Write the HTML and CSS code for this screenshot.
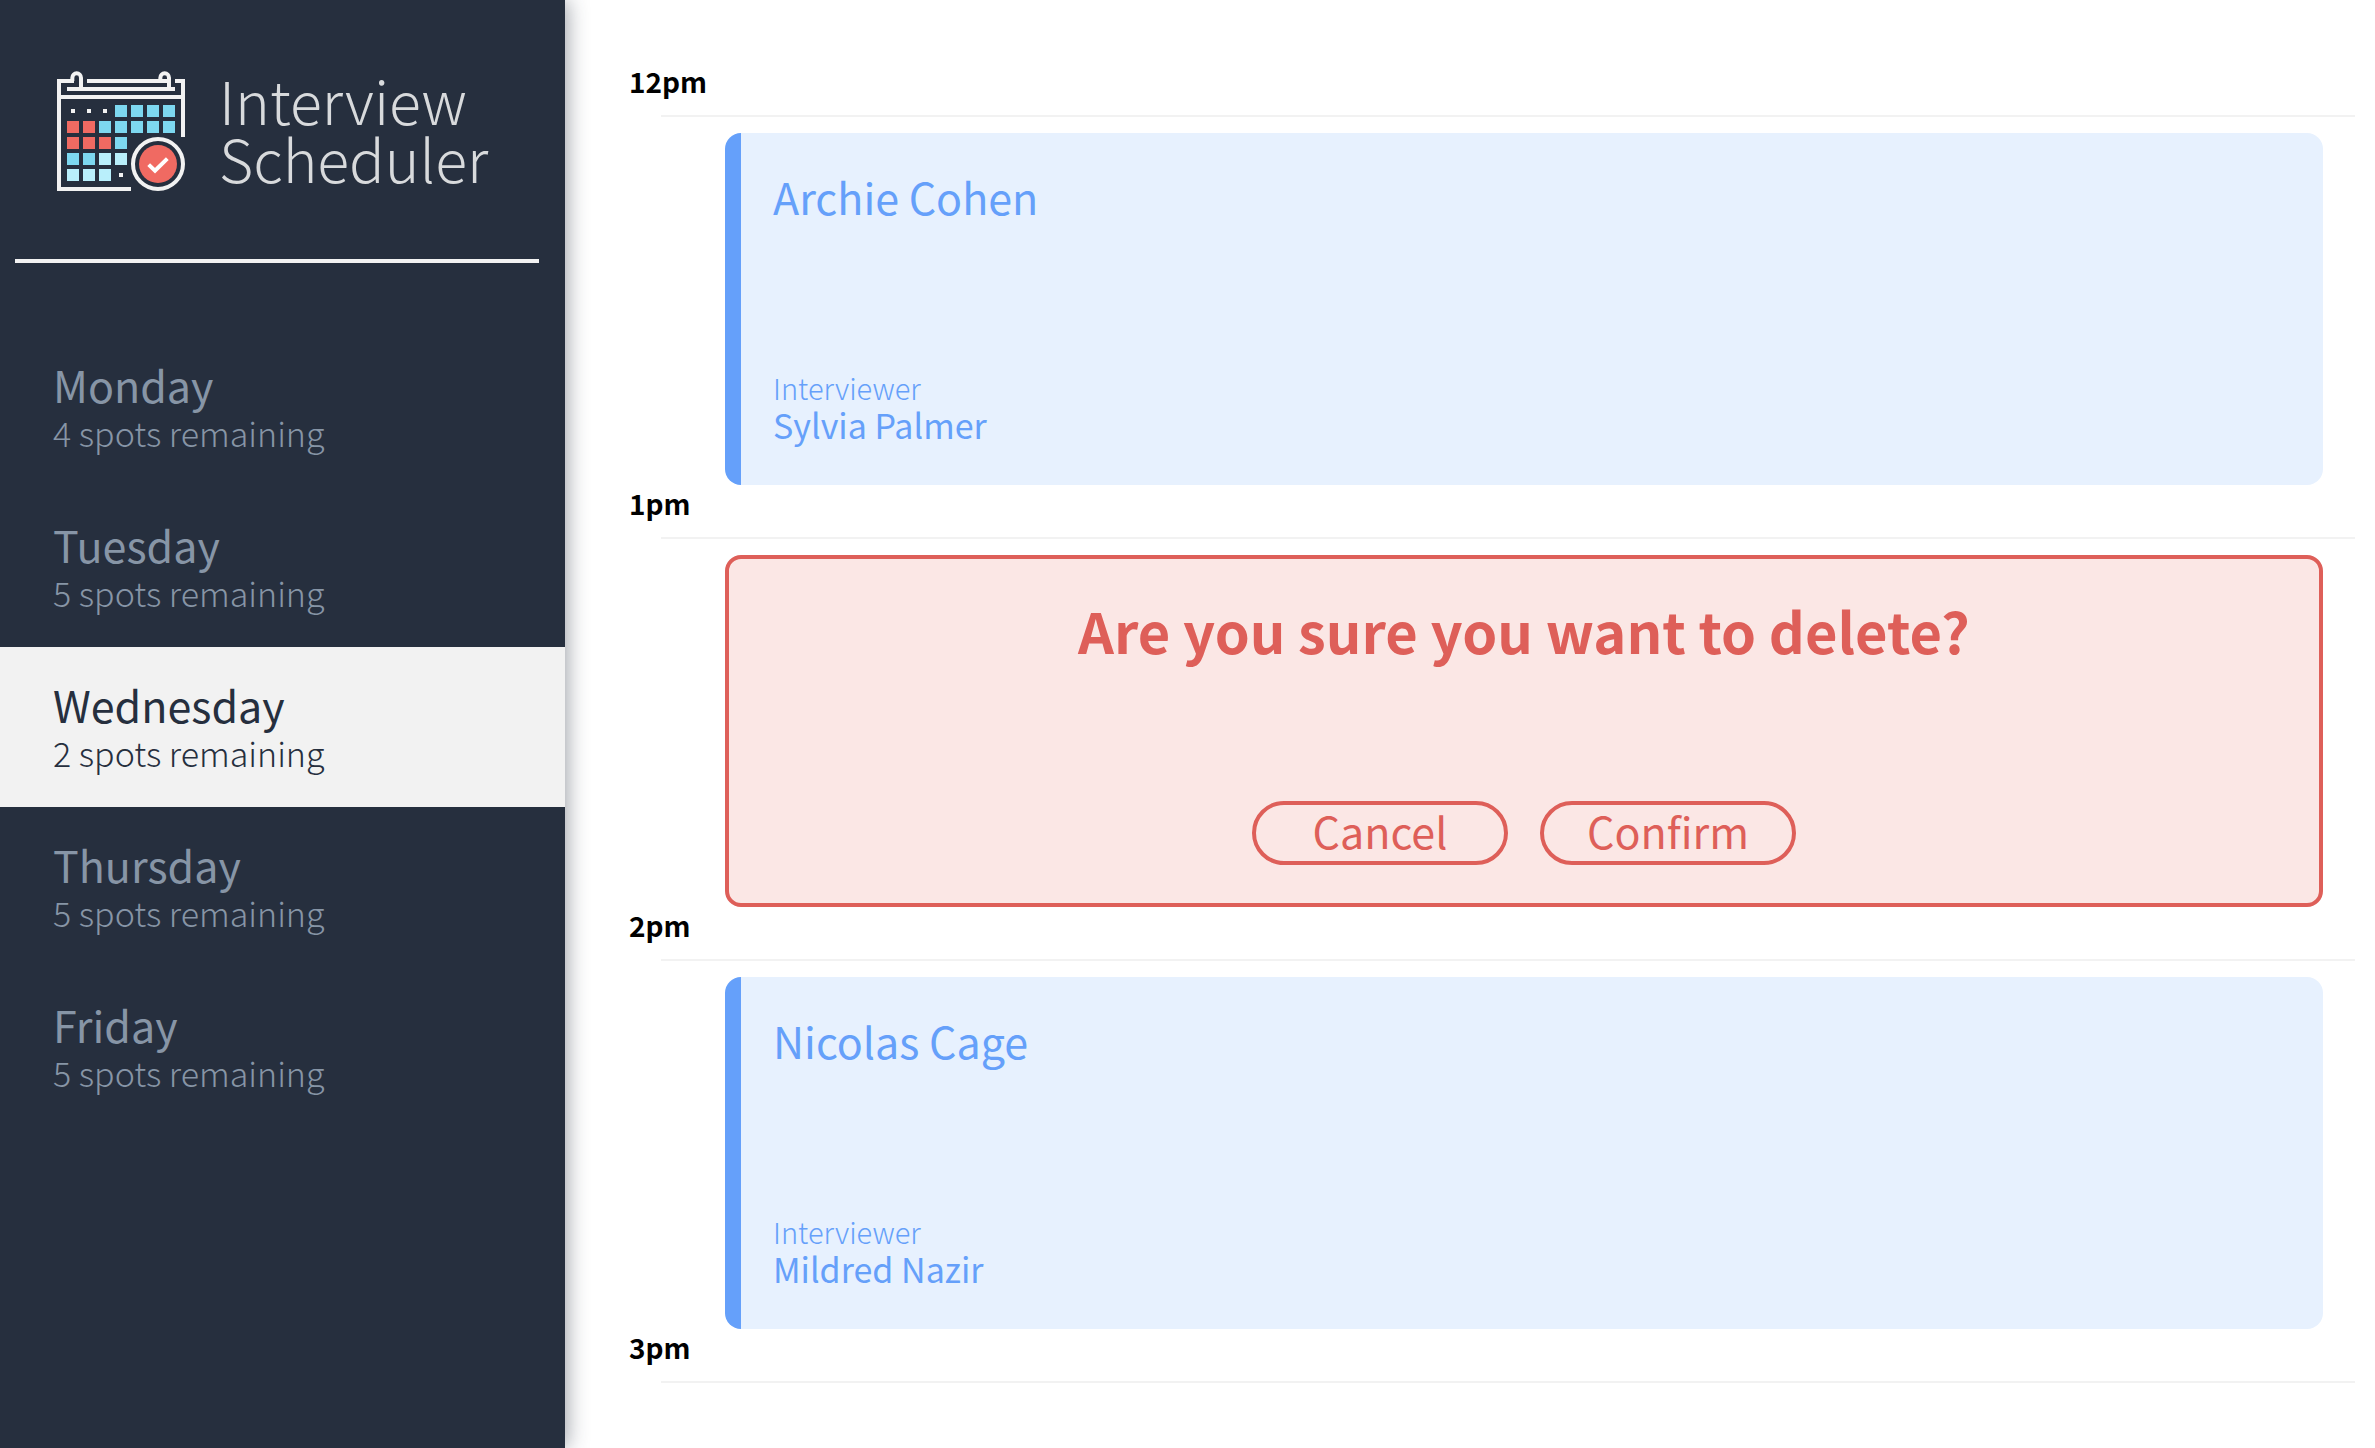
FILE: index.html
```html
<!DOCTYPE html>
<html lang="en">
<head>
<meta charset="utf-8">
<title>Interview Scheduler</title>
<link rel="stylesheet" href="styles.css">
</head>
<body>
<div class="layout">
  <aside class="sidebar">
    <div class="brand">
      <svg class="brand-icon" viewBox="51 33 387 363" aria-hidden="true">
        <g fill="none" stroke="#f2f2f2" stroke-width="12">
          <path d="M123 87V53a13 13 0 0 0-26 0V63M57 57V387H273M51 63H102M141 63H386M387 87V53a13 13 0 0 0-26 0V63M405 63H429V231M81 87H405M57 111H429"/>
          <circle cx="354" cy="312" r="75"/>
        </g>
        <path fill="#7dd8f0" d="M225 135h36v36h-36zM273 135h36v36h-36zM321 135h36v36h-36zM369 135h36v36h-36zM177 183h36v36h-36zM225 183h36v36h-36zM273 183h36v36h-36zM321 183h36v36h-36zM369 183h36v36h-36zM225 231h36v36h-36zM81 279h36v36h-36zM129 279h36v36h-36z"/>
        <path fill="#f06a62" d="M81 183h36v36h-36zM129 183h36v36h-36zM81 231h36v36h-36zM129 231h36v36h-36zM177 231h36v36h-36z"/>
        <path fill="#b9effb" d="M177 279h36v36h-36zM225 279h36v36h-36zM81 327h36v36h-36zM129 327h36v36h-36zM177 327h36v36h-36z"/>
        <path fill="#f2f2f2" d="M93 147h12v12h-12zM141 147h12v12h-12zM189 147h12v12h-12zM237 339h12v12h-12z"/>
        <circle cx="354" cy="312" r="57" fill="#f06a62"/>
        <path d="M326 314L345 332L382 296" fill="none" stroke="#fff" stroke-width="12"/>
      </svg>
      <h1 class="brand-name">Interview<br>Scheduler</h1>
    </div>
    <hr class="sidebar-rule">
    <nav class="days">
      <a class="day" href="#monday"><span class="day-name">Monday</span><span class="day-spots">4 spots remaining</span></a>
      <a class="day" href="#tuesday"><span class="day-name">Tuesday</span><span class="day-spots">5 spots remaining</span></a>
      <a class="day day-selected" href="#wednesday" aria-current="page"><span class="day-name">Wednesday</span><span class="day-spots">2 spots remaining</span></a>
      <a class="day" href="#thursday"><span class="day-name">Thursday</span><span class="day-spots">5 spots remaining</span></a>
      <a class="day" href="#friday"><span class="day-name">Friday</span><span class="day-spots">5 spots remaining</span></a>
    </nav>
  </aside>
  <main class="schedule">
    <section class="slot">
      <h2 class="slot-time">12pm</h2>
      <hr class="slot-rule">
      <article class="card">
        <h3 class="card-student">Archie Cohen</h3>
        <div>
          <div class="card-label">Interviewer</div>
          <div class="card-interviewer">Sylvia Palmer</div>
        </div>
      </article>
    </section>
    <section class="slot">
      <h2 class="slot-time">1pm</h2>
      <hr class="slot-rule">
      <article class="card card-confirm">
        <h3 class="confirm-title">Are you sure you want to delete?</h3>
        <div class="confirm-actions">
          <button class="button" type="button">Cancel</button>
          <button class="button" type="button">Confirm</button>
        </div>
      </article>
    </section>
    <section class="slot">
      <h2 class="slot-time">2pm</h2>
      <hr class="slot-rule">
      <article class="card">
        <h3 class="card-student">Nicolas Cage</h3>
        <div>
          <div class="card-label">Interviewer</div>
          <div class="card-interviewer">Mildred Nazir</div>
        </div>
      </article>
    </section>
    <section class="slot">
      <h2 class="slot-time">3pm</h2>
      <hr class="slot-rule">
    </section>
  </main>
</div>
</body>
</html>
```
FILE: styles.css
```css
* { box-sizing: border-box; }

body {
  margin: 0;
  background: #fff;
  color: #000;
  font-family: "Noto Sans CJK SC", "Noto Sans", sans-serif;
  font-weight: 400;
}

h1, h2, h3, hr { margin: 0; }
hr { border: 0; }

.layout {
  display: flex;
  min-height: 100vh;
}

/* Sidebar */
.sidebar {
  flex: 0 0 565px;
  padding-top: 71px;
  background: #262f3e;
  box-shadow: 2px 0 20px rgba(38, 47, 62, 0.45);
}

.brand {
  display: flex;
  gap: 33px;
  padding-left: 57px;
}

.brand-icon {
  width: 129px;
  height: 121px;
}

.brand-name {
  color: #d8dadc;
  font-size: 59px;
  font-weight: 300;
  line-height: 58px;
}

.sidebar-rule {
  height: 4px;
  margin: 67px 26px 64px 15px;
  background: #f2f2f2;
}

.day {
  display: flex;
  flex-direction: column;
  padding: 33px 53px 29px;
  color: #8795a6;
  text-decoration: none;
}

.day-selected {
  background: #f2f2f2;
  color: #262f3e;
}

.day-name {
  font-size: 43px;
  line-height: 48px;
}

.day-spots {
  font-size: 34px;
  font-weight: 300;
  line-height: 50px;
}

/* Schedule */
.schedule {
  flex: 1;
  padding: 63px 20px 0 64px;
}

.slot-time {
  margin-bottom: 16px;
  font-size: 28px;
  font-weight: 700;
  line-height: 36px;
}

.slot-rule {
  height: 2px;
  margin-left: 32px;
  background: #f2f2f2;
}

.card {
  display: flex;
  flex-direction: column;
  justify-content: space-between;
  min-height: 352px;
  margin: 16px 32px 0 96px;
  padding: 32px 32px 39px;
  border-left: 16px solid #65a0fa;
  border-radius: 16px;
  background: #e7f1fe;
  color: #65a0fa;
}

.card-student {
  font-size: 43px;
  font-weight: 400;
  line-height: 62px;
}

.card-label {
  font-size: 29px;
  font-weight: 300;
  line-height: 34px;
}

.card-interviewer {
  font-size: 34px;
  line-height: 42px;
}

.card-confirm {
  align-items: center;
  padding: 28px 28px 38px;
  border: 4px solid #de5f59;
  background: #fbe7e5;
  color: #de5f59;
}

.confirm-title {
  font-size: 56px;
  font-weight: 700;
  line-height: 86px;
}

.confirm-actions {
  display: flex;
  gap: 32px;
}

.button {
  width: 256px;
  height: 64px;
  padding: 0 0 6px;
  border: 4px solid #de5f59;
  border-radius: 32px;
  background: transparent;
  color: inherit;
  font-family: inherit;
  font-size: 43px;
  line-height: 50px;
}
```
